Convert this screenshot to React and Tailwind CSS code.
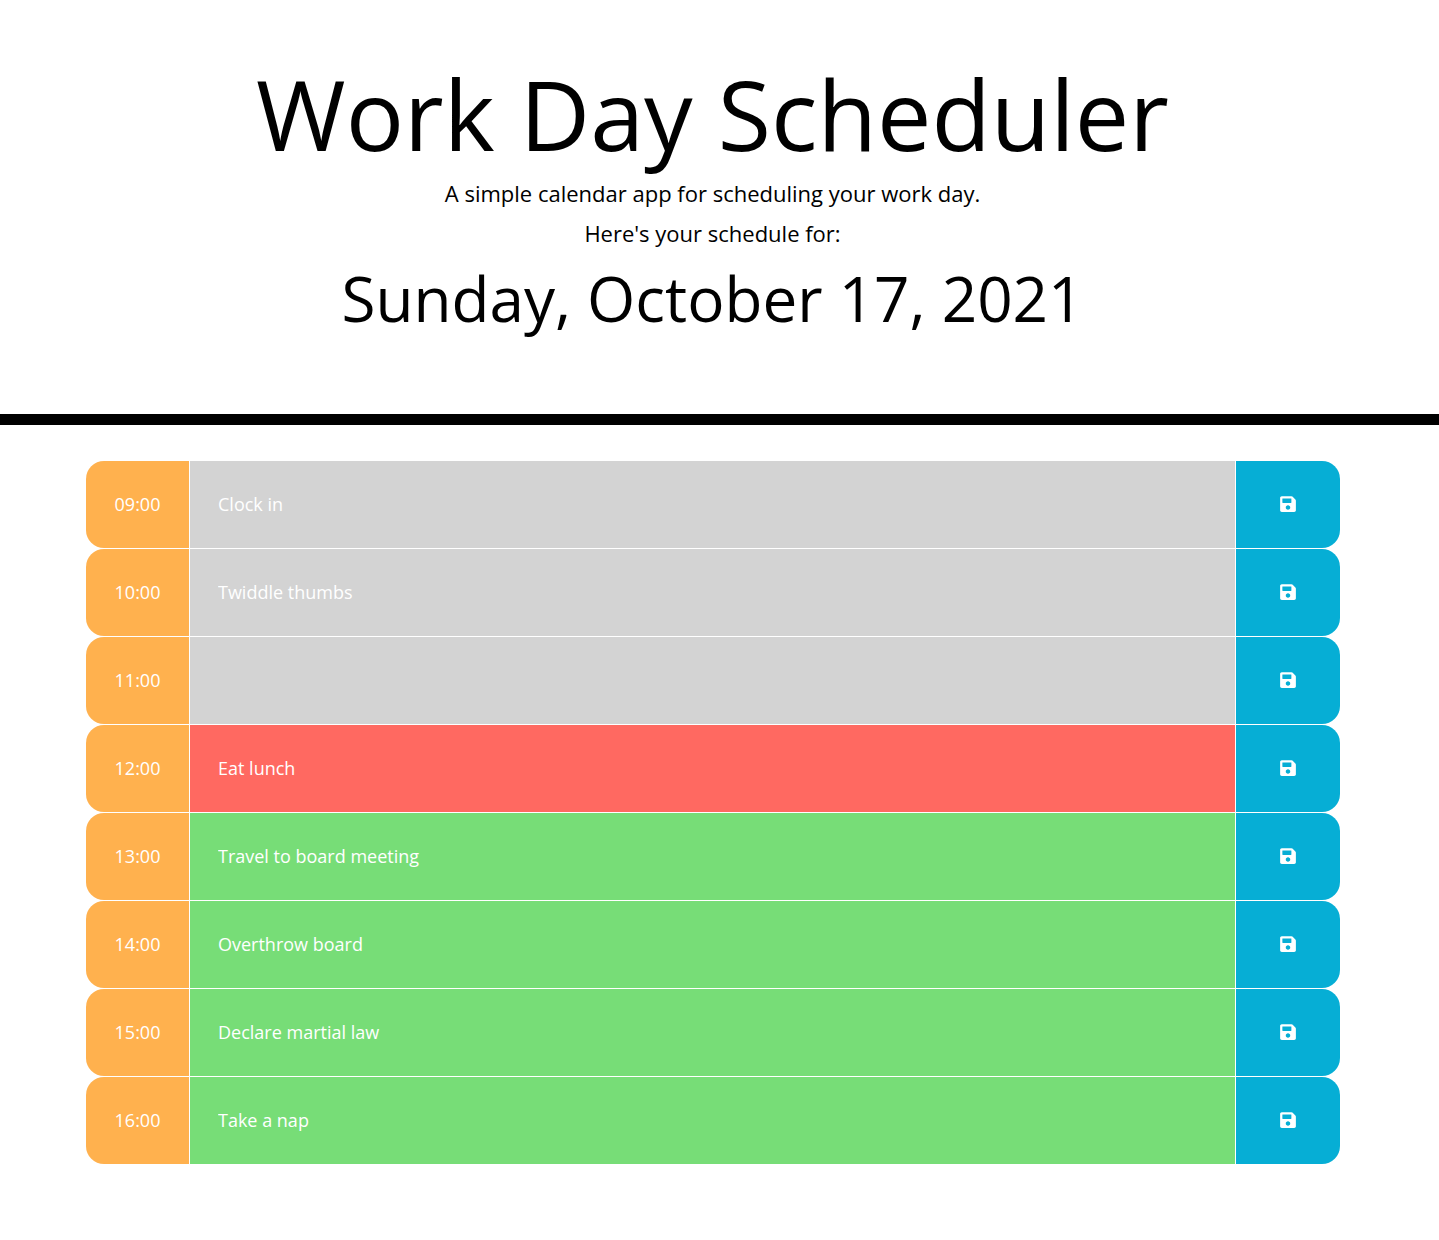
import { FaSave } from "react-icons/fa";

const past = "bg-[#d3d3d3]";
const present = "bg-[#ff6961]";
const future = "bg-[#77dd77]";

const blocks = [
  { hour: "09:00", task: "Clock in", tone: past },
  { hour: "10:00", task: "Twiddle thumbs", tone: past },
  { hour: "11:00", task: "", tone: past },
  { hour: "12:00", task: "Eat lunch", tone: present },
  { hour: "13:00", task: "Travel to board meeting", tone: future },
  { hour: "14:00", task: "Overthrow board", tone: future },
  { hour: "15:00", task: "Declare martial law", tone: future },
  { hour: "16:00", task: "Take a nap", tone: future },
];

function TimeBlock({ hour, task, tone }) {
  const id = `task-${hour}`;
  return (
    <li className="flex h-[87px] gap-px overflow-hidden rounded-[18px] text-lg text-white">
      <label htmlFor={id} className="flex w-[103px] shrink-0 items-center justify-center bg-[#ffb14e] pb-0.5">
        {hour}
      </label>
      <input id={id} type="text" defaultValue={task} className={`min-w-0 flex-1 px-7 pb-0.5 outline-none ${tone}`} />
      <button type="button" aria-label={`Save ${hour}`} className="flex w-[104px] shrink-0 items-center justify-center bg-[#06aed5] pb-0.5">
        <FaSave className="size-[18px]" />
      </button>
    </li>
  );
}

export default function App() {
  return (
    <div className="min-h-screen bg-white font-['Open_Sans',sans-serif] text-black">
      <header className="border-b-[11px] border-black pt-[53px] pr-[14px] pb-[71px] text-center">
        <h1 className="text-[97px] leading-[120px]">Work Day Scheduler</h1>
        <p className="text-[22px] leading-10">A simple calendar app for scheduling your work day.</p>
        <p className="text-[22px] leading-10">Here's your schedule for:</p>
        <p className="text-[62px] leading-[90px]">Sunday, October 17, 2021</p>
      </header>
      <main className="pt-9 pr-[99px] pb-9 pl-[86px]">
        <ul className="flex flex-col gap-px">
          {blocks.map((block) => (
            <TimeBlock key={block.hour} {...block} />
          ))}
        </ul>
      </main>
    </div>
  );
}
